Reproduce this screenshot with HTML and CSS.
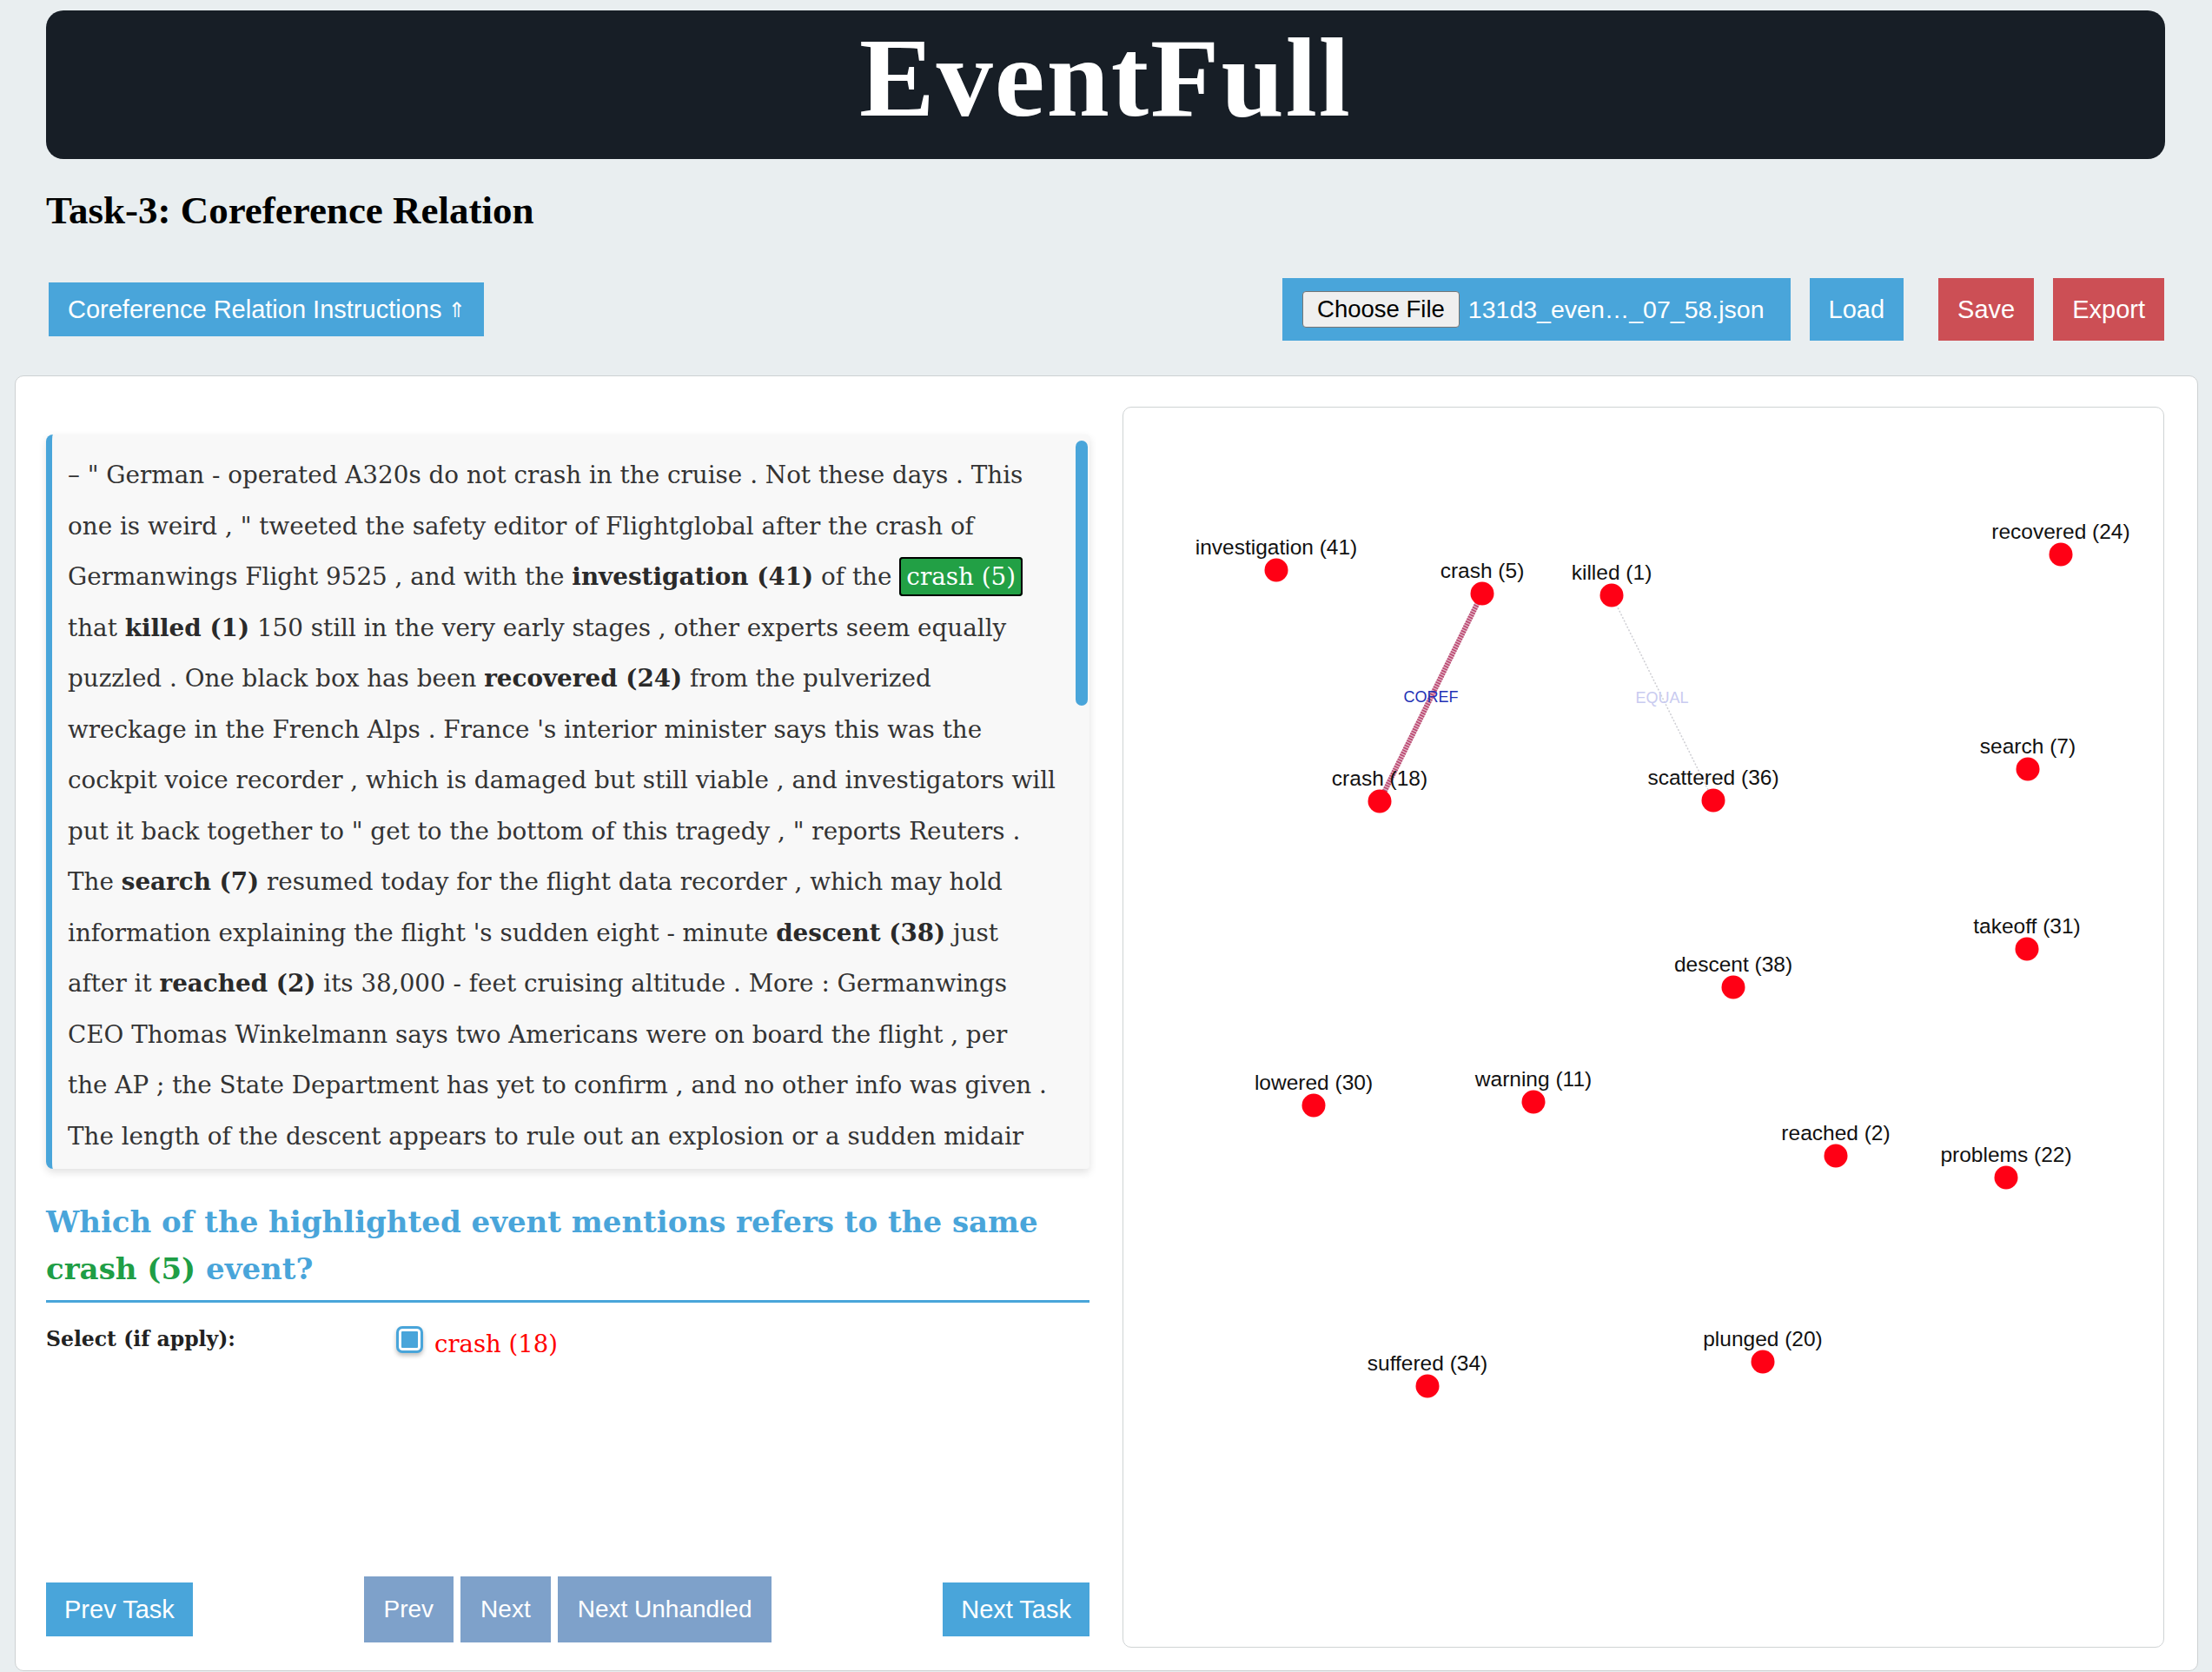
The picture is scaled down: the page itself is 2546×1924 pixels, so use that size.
FILE: index.html
```html
<!DOCTYPE html>
<html lang="en">
<head>
<meta charset="utf-8">
<title>EventFull</title>
<link rel="stylesheet" href="styles.css">
</head>
<body>
<header class="banner"><h1 class="brand">EventFull</h1></header>
<h2 class="task-title">Task-3: Coreference Relation</h2>
<div class="toolbar">
  <button class="btn btn-blue btn-instr">Coreference Relation Instructions <span class="arrow">⇑</span></button>
  <div class="toolbar-right">
    <label class="file-picker"><span class="file-btn">Choose File</span><span class="file-name">131d3_even…_07_58.json</span></label>
    <button class="btn btn-blue btn-tall">Load</button>
    <button class="btn btn-red btn-tall btn-save">Save</button>
    <button class="btn btn-red btn-tall btn-export">Export</button>
  </div>
</div>
<main class="card">
  <section class="left">
    <div class="doc-wrap">
      <div class="doc">
        <span class="ln">– " German - operated A320s do not crash in the cruise . Not these days . This</span>
        <span class="ln">one is weird , " tweeted the safety editor of Flightglobal after the crash of</span>
        <span class="ln">Germanwings Flight 9525 , and with the <b>investigation (41)</b> of the <span class="hl">crash (5)</span></span>
        <span class="ln">that <b>killed (1)</b> 150 still in the very early stages , other experts seem equally</span>
        <span class="ln">puzzled . One black box has been <b>recovered (24)</b> from the pulverized</span>
        <span class="ln">wreckage in the French Alps . France 's interior minister says this was the</span>
        <span class="ln">cockpit voice recorder , which is damaged but still viable , and investigators will</span>
        <span class="ln">put it back together to " get to the bottom of this tragedy , " reports Reuters .</span>
        <span class="ln">The <b>search (7)</b> resumed today for the flight data recorder , which may hold</span>
        <span class="ln">information explaining the flight 's sudden eight - minute <b>descent (38)</b> just</span>
        <span class="ln">after it <b>reached (2)</b> its 38,000 - feet cruising altitude . More : Germanwings</span>
        <span class="ln">CEO Thomas Winkelmann says two Americans were on board the flight , per</span>
        <span class="ln">the AP ; the State Department has yet to confirm , and no other info was given .</span>
        <span class="ln">The length of the descent appears to rule out an explosion or a sudden midair</span>
      </div>
      <div class="thumb"></div>
    </div>
    <h3 class="question">Which of the highlighted event mentions refers to the same <span class="q-event">crash (5)</span> event?</h3>
    <div class="select-row">
      <div class="select-label">Select (if apply):</div>
      <label class="option"><span class="check"></span><span class="opt-text">crash (18)</span></label>
    </div>
    <div class="nav">
      <button class="btn btn-blue nav-task">Prev Task</button>
      <div class="nav-mid">
        <button class="btn btn-muted">Prev</button>
        <button class="btn btn-muted">Next</button>
        <button class="btn btn-muted">Next Unhandled</button>
      </div>
      <button class="btn btn-blue nav-task">Next Task</button>
    </div>
  </section>
  <section class="graph">
    <svg class="graph-svg" width="1197" height="1426" viewBox="0 0 1197 1426" xmlns="http://www.w3.org/2000/svg">
      <line x1="413" y1="214" x2="295" y2="453" stroke="#e2b3c4" stroke-width="6"/>
      <line x1="413" y1="214" x2="295" y2="453" stroke="#b9466f" stroke-width="6" stroke-dasharray="1.6 1.4"/>
      <line x1="562" y1="216" x2="679" y2="452" stroke="#cfcfd4" stroke-width="1.5" stroke-dasharray="2 2"/>
      <g class="edge-label">
        <text x="354" y="339" fill="#2331b5">COREF</text>
        <text x="620" y="340" fill="#c9cbf0">EQUAL</text>
      </g>
      <g class="nodes" fill="#ff0015">
        <circle cx="176" cy="187" r="13.5"/>
        <circle cx="413" cy="214" r="13.5"/>
        <circle cx="562" cy="216" r="13.5"/>
        <circle cx="1079" cy="169" r="13.5"/>
        <circle cx="295" cy="453" r="13.5"/>
        <circle cx="679" cy="452" r="13.5"/>
        <circle cx="1041" cy="416" r="13.5"/>
        <circle cx="1040" cy="623" r="13.5"/>
        <circle cx="702" cy="667" r="13.5"/>
        <circle cx="219" cy="803" r="13.5"/>
        <circle cx="472" cy="799" r="13.5"/>
        <circle cx="820" cy="861" r="13.5"/>
        <circle cx="1016" cy="886" r="13.5"/>
        <circle cx="350" cy="1126" r="13.5"/>
        <circle cx="736" cy="1098" r="13.5"/>
      </g>
      <g class="node-label">
        <text x="176" y="169">investigation (41)</text>
        <text x="413" y="196">crash (5)</text>
        <text x="562" y="198">killed (1)</text>
        <text x="1079" y="151">recovered (24)</text>
        <text x="295" y="435">crash (18)</text>
        <text x="679" y="434">scattered (36)</text>
        <text x="1041" y="398">search (7)</text>
        <text x="1040" y="605">takeoff (31)</text>
        <text x="702" y="649">descent (38)</text>
        <text x="219" y="785">lowered (30)</text>
        <text x="472" y="781">warning (11)</text>
        <text x="820" y="843">reached (2)</text>
        <text x="1016" y="868">problems (22)</text>
        <text x="350" y="1108">suffered (34)</text>
        <text x="736" y="1080">plunged (20)</text>
      </g>
    </svg>
  </section>
</main>
</body>
</html>
```
FILE: styles.css
```css
* { box-sizing: border-box; }
html, body { margin: 0; padding: 0; }
body {
  background: #e9eef0;
  font-family: "Liberation Sans", Arial, sans-serif;
  color: #000;
}

/* Banner */
.banner {
  margin: 12px 54px 0 53px;
  height: 171px;
  background: #171e26;
  border-radius: 20px;
  display: flex;
  align-items: center;
  justify-content: center;
  padding-bottom: 18px;
}
.brand {
  margin: 0;
  font-family: "Liberation Serif", "Times New Roman", serif;
  font-weight: 700;
  font-size: 130px;
  letter-spacing: 2px;
  line-height: 1;
  color: #fff;
}

.task-title {
  margin: 33px 0 0 53px;
  font-family: "Liberation Serif", "Times New Roman", serif;
  font-weight: 700;
  font-size: 45px;
  line-height: 52px;
  color: #000;
}

/* Buttons */
.btn {
  border: 0;
  border-radius: 0;
  margin: 0;
  font-family: "Liberation Sans", Arial, sans-serif;
  font-size: 29px;
  color: #fff;
  padding: 0 22px;
  display: inline-flex;
  align-items: center;
  justify-content: center;
  cursor: pointer;
}
.btn-blue { background: #49a5da; }
.btn-red { background: #cc4f55; }
.btn-muted { background: #7ea1ca; }

.toolbar {
  display: flex;
  justify-content: space-between;
  align-items: center;
  margin: 52px 55px 0 56px;
  height: 72px;
}
.btn-instr { height: 62px; padding: 0 21px 0 22px; }
.arrow {
  font-family: "DejaVu Sans", sans-serif;
  font-size: 24px;
  margin-left: 7px;
  position: relative;
  top: 1px;
}
.toolbar-right {
  display: flex;
  align-items: center;
}
.file-picker {
  display: flex;
  align-items: center;
  height: 72px;
  background: #49a5da;
  padding: 0 30px 0 23px;
  margin-right: 22px;
}
.file-btn {
  display: flex;
  align-items: center;
  height: 42px;
  padding: 0 16px;
  background: #efefef;
  border: 1px solid #767676;
  border-radius: 4px;
  font-size: 27.5px;
  color: #000;
}
.file-name {
  margin-left: 10px;
  font-size: 28.5px;
  color: #fff;
}
.btn-tall { height: 72px; }
.btn-save { margin-left: 40px; }
.btn-export { margin-left: 22px; }

/* Card */
.card {
  margin: 40px 16px 0 17px;
  background: #fff;
  border: 1px solid #cdd1d2;
  border-radius: 10px;
  padding: 35px 38px 26px 35px;
  display: grid;
  grid-template-columns: 1201px 1199px;
  column-gap: 38px;
}

.left {
  display: flex;
  flex-direction: column;
  padding-top: 32px;
  padding-bottom: 6px;
}

.doc-wrap {
  position: relative;
}
.doc {
  height: 845px;
  background: #f8f8f8;
  border-left: 7px solid #49a5da;
  border-radius: 8px 4px 4px 8px;
  box-shadow: 0 4px 10px rgba(0, 0, 0, 0.12);
  padding: 18px 20px 0 18px;
  overflow: hidden;
  font-family: "DejaVu Serif", Georgia, serif;
  font-size: 27.8px;
  line-height: 58.5px;
  color: #333;
}
.thumb {
  position: absolute;
  top: 7px;
  right: 2px;
  width: 14px;
  height: 305px;
  border-radius: 7px;
  background: #49a5da;
}
.doc b { font-weight: 700; color: #2a2a2a; }
.ln { display: block; white-space: nowrap; }
.hl {
  background: #22a045;
  color: #fff;
  border: 2px solid #000;
  border-radius: 4px;
  padding: 4px 6px;
}

.question {
  margin: 34px 0 0;
  padding-bottom: 9px;
  border-bottom: 3px solid #49a5da;
  font-family: "DejaVu Serif", Georgia, serif;
  font-weight: 700;
  font-size: 34px;
  line-height: 54px;
  color: #49a5da;
}
.q-event { color: #1f9e46; }

.select-row {
  display: flex;
  align-items: flex-start;
  margin-top: 24px;
}
.select-label {
  width: 403px;
  font-family: "DejaVu Serif", Georgia, serif;
  font-weight: 700;
  font-size: 23.5px;
  line-height: 36px;
  color: #222;
}
.option {
  display: flex;
  align-items: flex-start;
  margin-top: 3px;
}
.check {
  width: 31px;
  height: 31px;
  background: #49a5da;
  border: 3px solid #49a5da;
  border-radius: 7px;
  box-shadow: inset 0 0 0 3px #fff, 0 3px 5px rgba(0, 0, 0, 0.25);
}
.opt-text {
  margin-left: 13px;
  margin-top: 2px;
  font-family: "DejaVu Serif", Georgia, serif;
  font-size: 27.5px;
  line-height: 36px;
  color: #ff0000;
}

.nav {
  margin-top: auto;
  display: flex;
  justify-content: space-between;
  align-items: center;
  height: 76px;
}
.nav-task { height: 62px; padding: 0 21px; }
.nav-mid { display: flex; gap: 8px; }
.nav-mid .btn { height: 76px; font-size: 28px; padding: 0 23px; }

/* Graph */
.graph {
  height: 1428px;
  border: 1px solid #cfd3d4;
  border-radius: 10px;
  overflow: hidden;
}
.graph-svg { display: block; }
.node-label text {
  font-family: "Liberation Sans", Arial, sans-serif;
  font-size: 24.5px;
  fill: #111;
  text-anchor: middle;
}
.edge-label text {
  font-family: "Liberation Sans", Arial, sans-serif;
  font-size: 18px;
  text-anchor: middle;
}
```
